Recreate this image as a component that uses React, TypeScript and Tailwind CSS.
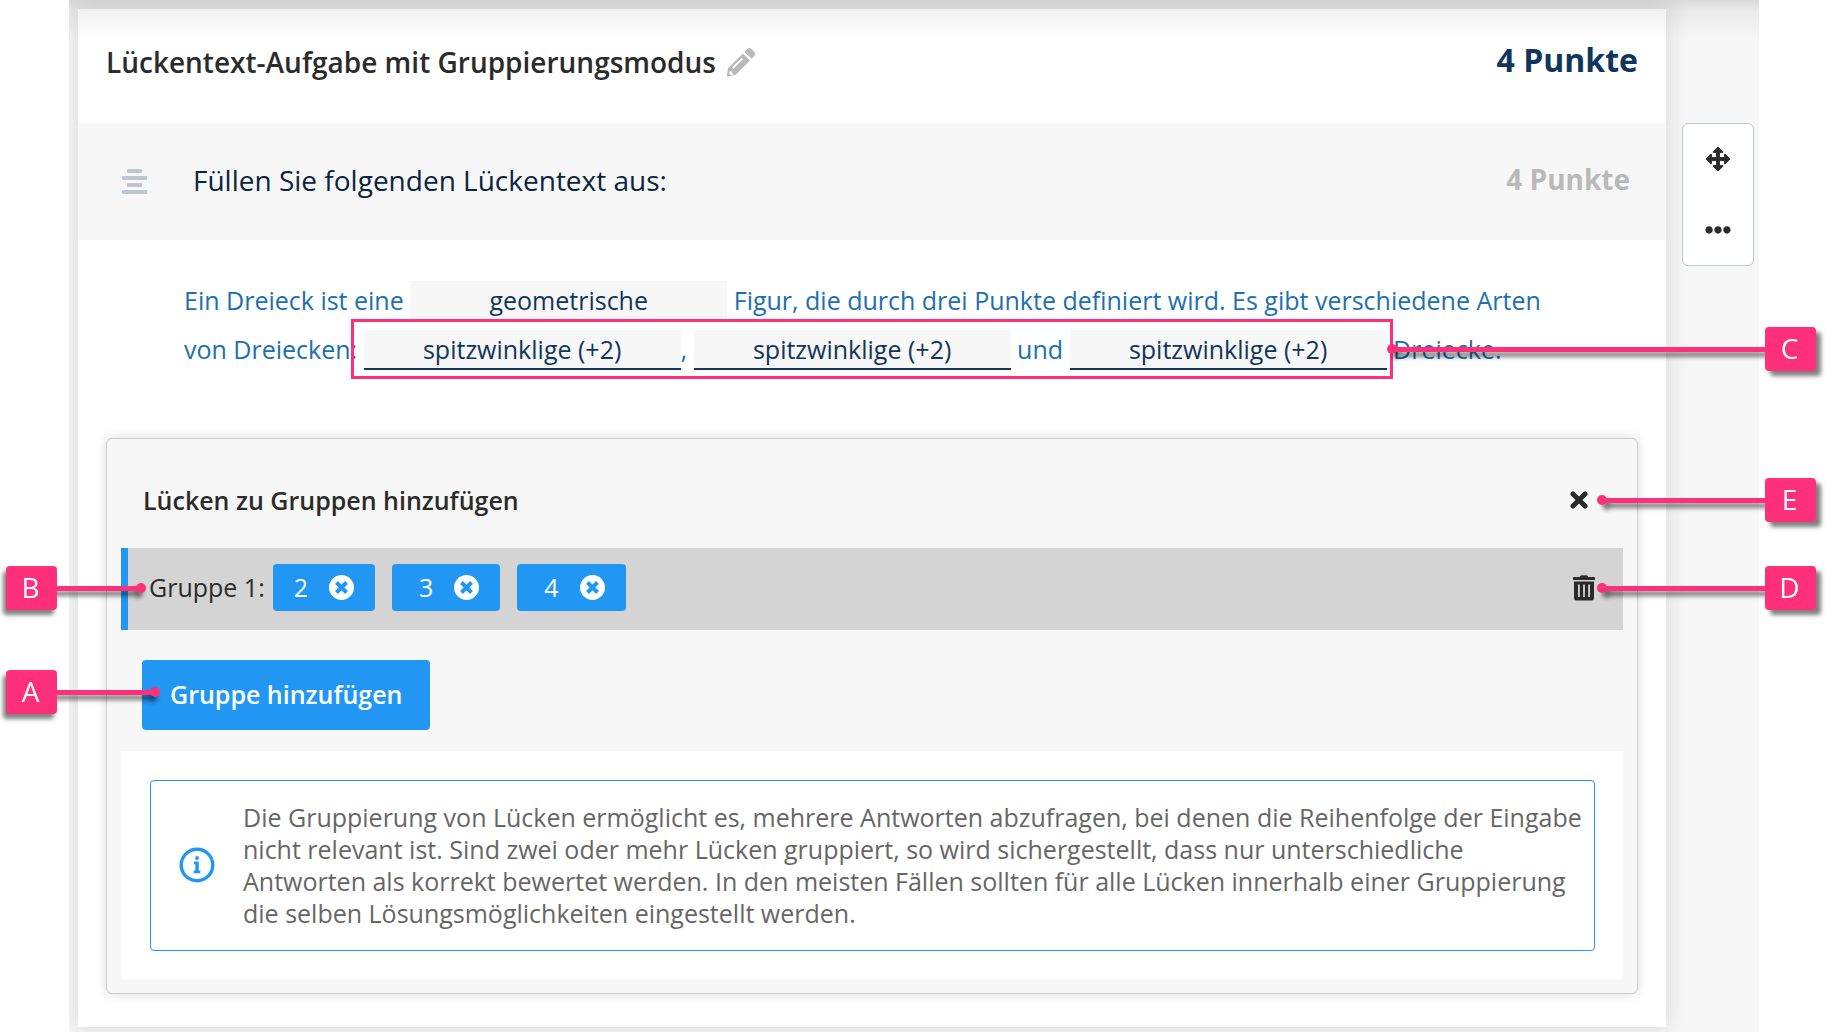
import React, { useState } from 'react';
import { FaEllipsisH } from 'react-icons/fa';

const INFO_TEXT =
  'Die Gruppierung von Lücken ermöglicht es, mehrere Antworten abzufragen, bei denen die Reihenfolge der Eingabe nicht relevant ist. Sind zwei oder mehr Lücken gruppiert, so wird sichergestellt, dass nur unterschiedliche Antworten als korrekt bewertet werden. In den meisten Fällen sollten für alle Lücken innerhalb einer Gruppierung die selben Lösungsmöglichkeiten eingestellt werden.';

const PencilIcon = () => (
  <svg viewBox="0 0 30 30" className="w-[30px] h-[30px]" fill="#b9b9b9" aria-hidden="true">
    <path d="M18.500 5l3-3.200q2-1.500 4 .2l3 3.200q1.500 1.800 0 3.600l-3 3z" />
    <path
      fillRule="evenodd"
      d="M17 6.500l7 7L9.500 28 .8 29.500 2 20.900zM6 20.500l1.300 1.300 9.500-9.500L15.500 11zM3.600 24.300l-.6 2.800 3 1 2-1-1.800-.6-.4-1.900z"
    />
  </svg>
);

const GapTextIcon = () => (
  <svg viewBox="0 0 25 26" className="w-[25px] h-[26px]" fill="#bbc6cf" aria-hidden="true">
    <rect x="5" y="0" width="15" height="4" rx="1" />
    <rect x="0" y="7" width="25" height="4" rx="1" />
    <rect x="5" y="14" width="15" height="4" rx="1" />
    <rect x="0" y="21" width="25" height="4" rx="1" />
  </svg>
);

const MoveIcon = () => (
  <svg viewBox="0 0 26 26" className="w-[26px] h-[26px]" fill="currentColor" aria-hidden="true">
    <path
      stroke="currentColor"
      strokeWidth="1"
      strokeLinejoin="round"
      d="M13 1l4.800 4.600v.8h-3.400v5.200h5.200V8.200h.8L25 13l-4.600 4.800h-.8v-3.400h-5.200v5.200h3.400v.8L13 25l-4.800-4.600v-.8h3.400v-5.200H6.400v3.400h-.8L1 13l4.600-4.800h.8v3.400h5.200V6.400H8.200v-.8z"
    />
  </svg>
);

const CloseIcon = () => (
  <svg viewBox="0 0 18 18" className="w-[18px] h-[18px]" stroke="currentColor" aria-hidden="true">
    <path d="M3 3l12 12M15 3L3 15" strokeWidth="5" strokeLinecap="round" />
  </svg>
);

const RemoveIcon = () => (
  <svg viewBox="0 0 25 25" className="w-[25px] h-[25px]" aria-hidden="true">
    <circle cx="12.500" cy="12.500" r="12.500" fill="#fff" />
    <path d="M7.500 7.500l10 10M17.500 7.500l-10 10" stroke="#2296f3" strokeWidth="4" />
  </svg>
);

const TrashIcon = () => (
  <svg viewBox="0 0 22 26" className="w-[22px] h-[26px]" fill="currentColor" aria-hidden="true">
    <path d="M6.500 2Q7.500.3 9 .3h4q1.500 0 2.500 1.700H21q1 0 1 1v2H0V3q0-1 1-1z" />
    <path
      fillRule="evenodd"
      d="M1 6.500h20V23q0 2.500-2.500 2.500h-15Q1 25.500 1 23zM5 9.500V22h1.800V9.500zM10.100 9.500V22h1.800V9.500zM15.200 9.500V22H17V9.500z"
    />
  </svg>
);

const InfoIcon = () => (
  <svg viewBox="0 0 36 36" className="w-9 h-9 shrink-0" fill="#2296f3" aria-hidden="true">
    <circle cx="18" cy="18" r="15.800" fill="none" stroke="#2296f3" strokeWidth="3.400" />
    <circle cx="18" cy="11" r="1.900" />
    <path d="M15 14.500h4.800v9h1.500v2.800h-6.600v-2.800h1.600v-6.200H15z" />
  </svg>
);

interface GapProps {
  label: string;
  value: string;
  grouped?: boolean;
}

const Gap = ({ label, value, grouped }: GapProps) => (
  <input
    type="text"
    aria-label={label}
    defaultValue={value}
    className={`inline-block w-[317px] h-10 pt-0.5 bg-[#f7f7f7] text-center text-[#11365c] outline-none border-b-2 ${
      grouped ? 'border-[#11365c]' : 'border-[#f7f7f7]'
    }`}
  />
);

interface CalloutProps {
  letter: string;
  side: 'left' | 'right';
  className: string;
  lineClass: string;
}

const Callout = ({ letter, side, className, lineClass }: CalloutProps) => (
  <div
    className={`absolute z-20 flex items-center pointer-events-none ${
      side === 'left'
        ? 'left-[6px] drop-shadow-[-3px_5px_2px_rgba(0,0,0,0.5)]'
        : 'right-6 flex-row-reverse drop-shadow-[5px_5px_2px_rgba(0,0,0,0.5)]'
    } ${className}`}
  >
    <span className="flex w-[51px] h-11 items-center justify-center rounded bg-[#ff2f7a] pr-0.5 pb-0.5 text-[28px] leading-none text-white">
      {letter}
    </span>
    <span className={`h-[5px] bg-[#ff2f7a] ${lineClass}`}></span>
    <span className={`w-2.5 h-2.5 rounded-full bg-[#ff2f7a] ${side === 'left' ? '-ml-1' : '-mr-1'}`}></span>
  </div>
);

function App() {
  const [gaps, setGaps] = useState<number[]>([2, 3, 4]);

  const removeGap = (gap: number) => {
    setGaps(prev => prev.filter(g => g !== gap));
  };

  return (
    <div className="relative min-h-screen overflow-hidden bg-white font-['Open_Sans',sans-serif] text-[#2b2b2b]">
      <div className="relative flex ml-[69px] mr-[81px] pl-[9px] pt-[9px] pb-[5px] bg-[#f7f7f7] overflow-hidden">
        {/* Task card */}
        <main className="flex-1 min-w-0 bg-white shadow-[0_0_20px_4px_rgba(0,0,0,0.1)]">
          <header className="flex h-[114px] items-start justify-between px-7 pt-[31px]">
            <div className="flex items-center gap-2.5 pt-0.5">
              <h1 className="text-[28px] leading-10 font-semibold">Lückentext-Aufgabe mit Gruppierungsmodus</h1>
              <button type="button" aria-label="Titel bearbeiten">
                <PencilIcon />
              </button>
            </div>
            <p className="text-[32px] leading-10 font-bold text-[#11365c]">4 Punkte</p>
          </header>

          <section className="flex h-[117px] items-center bg-[#f7f7f7] pl-11 pr-9">
            <GapTextIcon />
            <p className="ml-[46px] flex-1 pb-1 text-[28px] leading-10 text-[#0c2340]">
              Füllen Sie folgenden Lückentext aus:
            </p>
            <p className="pb-1.5 text-[28px] leading-10 font-bold text-[#b9b9b9]">4 Punkte</p>
          </section>

          <section className="relative pl-[106px] pr-[100px] pt-9 pb-16 text-[25px] leading-[49px] text-[#1c6fb0]">
            Ein Dreieck ist eine <Gap label="Lücke 1" value="geometrische" /> Figur, die durch drei Punkte definiert wird.
            Es gibt verschiedene Arten von Dreiecken: <Gap label="Lücke 2" value="spitzwinklige (+2)" grouped />,{' '}
            <Gap label="Lücke 3" value="spitzwinklige (+2)" grouped /> und{' '}
            <Gap label="Lücke 4" value="spitzwinklige (+2)" grouped /> Dreiecke.
            <div className="absolute left-[273px] top-[79px] w-[1042px] h-[60px] border-3 border-[#ff2f7a] pointer-events-none"></div>
          </section>

          {/* Grouping panel */}
          <section className="mx-7 mb-[33px] rounded-md border border-[#cfcfcf] bg-[#f7f7f7] p-3.5 shadow-[0_0_12px_rgba(0,0,0,0.15)]">
            <div className="flex h-[95px] items-center justify-between pb-0.5 pl-[22px] pr-[35px]">
              <h2 className="text-[25px] leading-9 font-semibold">Lücken zu Gruppen hinzufügen</h2>
              <button type="button" aria-label="Schließen">
                <CloseIcon />
              </button>
            </div>

            <div className="flex h-[82px] items-center border-l-7 border-[#2296f3] bg-[#d4d4d4] pb-[3px] pl-[21px] pr-7 text-[25px]">
              <span className="mr-2">Gruppe 1:</span>
              <div className="flex flex-1 gap-[17px]">
                {gaps.map((gap, i) => (
                  <button
                    key={gap}
                    type="button"
                    aria-label={`Lücke ${gap} entfernen`}
                    onClick={() => removeGap(gap)}
                    className={`flex h-[47px] items-center gap-[21px] rounded bg-[#2296f3] pr-[21px] text-white ${
                      i === 0 ? 'pl-[21px]' : 'pl-[27px]'
                    }`}
                  >
                    {gap}
                    <RemoveIcon />
                  </button>
                ))}
              </div>
              <button type="button" aria-label="Gruppe löschen">
                <TrashIcon />
              </button>
            </div>

            <button
              type="button"
              className="mt-[30px] mb-[21px] ml-[21px] h-[70px] rounded bg-[#2296f3] px-7 text-[25px] font-semibold text-white"
            >
              Gruppe hinzufügen
            </button>

            <div className="bg-white pt-[29px] pb-7 pl-[29px] pr-7">
              <div className="flex h-[171px] items-center rounded border border-[#2296f3] pb-0.5 pl-7 pr-1">
                <InfoIcon />
                <p className="ml-7 text-[25px] leading-8 text-[#666]">{INFO_TEXT}</p>
              </div>
            </div>
          </section>
        </main>

        {/* Side toolbar */}
        <aside className="w-[93px] pl-4 pr-[5px] pt-[114px]">
          <div className="relative flex h-[143px] flex-col rounded-md border border-[#bbc6cf] bg-white">
            <button type="button" aria-label="Verschieben" className="flex flex-1 items-center justify-center">
              <MoveIcon />
            </button>
            <button type="button" aria-label="Weitere Aktionen" className="flex flex-1 items-center justify-center">
              <FaEllipsisH size={26} />
            </button>
          </div>
        </aside>

        {/* Shade below the page header */}
        <div className="absolute inset-x-0 top-0 h-10 bg-linear-to-b from-black/12 via-black/5 via-30% to-transparent pointer-events-none"></div>
      </div>

      <Callout letter="A" side="left" className="top-[670px]" lineClass="w-[97px]" />
      <Callout letter="B" side="left" className="top-[566px]" lineClass="w-[83px]" />
      <Callout letter="C" side="right" className="top-[327px]" lineClass="w-[372px]" />
      <Callout letter="D" side="right" className="top-[566px]" lineClass="w-[162px]" />
      <Callout letter="E" side="right" className="top-[478px]" lineClass="w-[162px]" />
    </div>
  );
}

export default App;
